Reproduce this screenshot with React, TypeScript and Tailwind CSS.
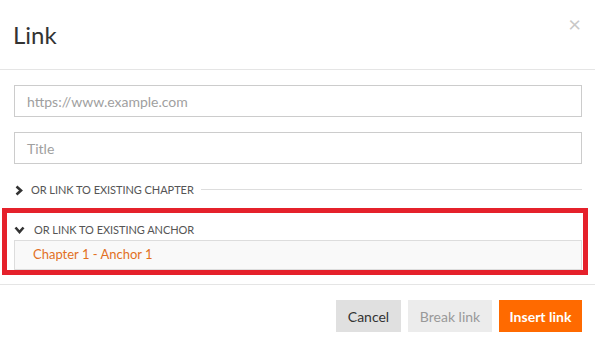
import React from "react";

export default function App() {
  return (
    <div className="w-[595px] h-[346px] bg-white overflow-hidden" style={{ fontFamily: "Lato, 'Open Sans', sans-serif" }}>
      <div className="h-[69px] flex items-center pl-[13px] pr-[14px] justify-between border-b border-[#e5e5e5] box-content">
        <div className="text-[24px] text-[#333] leading-none">Link</div>
        <div className="text-[#c8c8c8] text-[22px] leading-none -mt-[22px]">×</div>
      </div>
      <div className="pl-[14px] pr-[13px] pt-[15px]">
        <div className="h-[32px] border border-[#cccccc] flex items-center pl-[12px] text-[14px] text-[#a0a0a0]">
          https://www.example.com
        </div>
        <div className="mt-[15px] h-[32px] border border-[#cccccc] flex items-center pl-[12px] text-[14px] text-[#a0a0a0]">
          Title
        </div>
        <div className="mt-[18px] h-[16px] flex items-center">
          <svg width="8" height="11" viewBox="0 0 8 11" className="ml-[1px]">
            <polyline points="1.5,1.5 6,5.5 1.5,9.5" fill="none" stroke="#333" strokeWidth="2.6" />
          </svg>
          <span className="ml-[8px] text-[11px] text-[#555] tracking-[-0.05px] whitespace-nowrap">OR LINK TO EXISTING CHAPTER</span>
          <div className="flex-1 ml-[7px] h-px bg-[#dddddd] -mt-[2px]" />
        </div>
        <div className="mt-[10px] -ml-[12px] -mr-[6px] border-[5px] border-[#e5212b] pl-[7px] pr-[1px] pt-[9px]">
          <div className="h-[16px] flex items-center">
            <svg width="11" height="8" viewBox="0 0 11 8">
              <polyline points="1.5,1.5 5.5,6 9.5,1.5" fill="none" stroke="#333" strokeWidth="2.6" />
            </svg>
            <span className="ml-[9px] text-[11px] text-[#555] tracking-[-0.05px] whitespace-nowrap">OR LINK TO EXISTING ANCHOR</span>
          </div>
          <div className="mt-[2px] h-[30px] border border-[#dddddd] bg-[#f9f9f9] flex items-center pl-[18px] text-[13px] text-[#e2701f]">
            Chapter 1 - Anchor 1
          </div>
        </div>
      </div>
      <div className="mt-[9px] border-t border-[#e5e5e5] flex justify-end gap-[7px] pr-[13px] pt-[15px]">
        <div className="w-[65px] h-[32px] bg-[#e0e0e0] flex items-center justify-center text-[14px] font-normal text-[#333]">Cancel</div>
        <div className="w-[84px] h-[32px] bg-[#ececec] flex items-center justify-center text-[14px] font-normal text-[#999]">Break link</div>
        <div className="w-[83px] h-[32px] bg-[#ff6a00] flex items-center justify-center text-[14px] font-bold text-white">Insert link</div>
      </div>
    </div>
  );
}
